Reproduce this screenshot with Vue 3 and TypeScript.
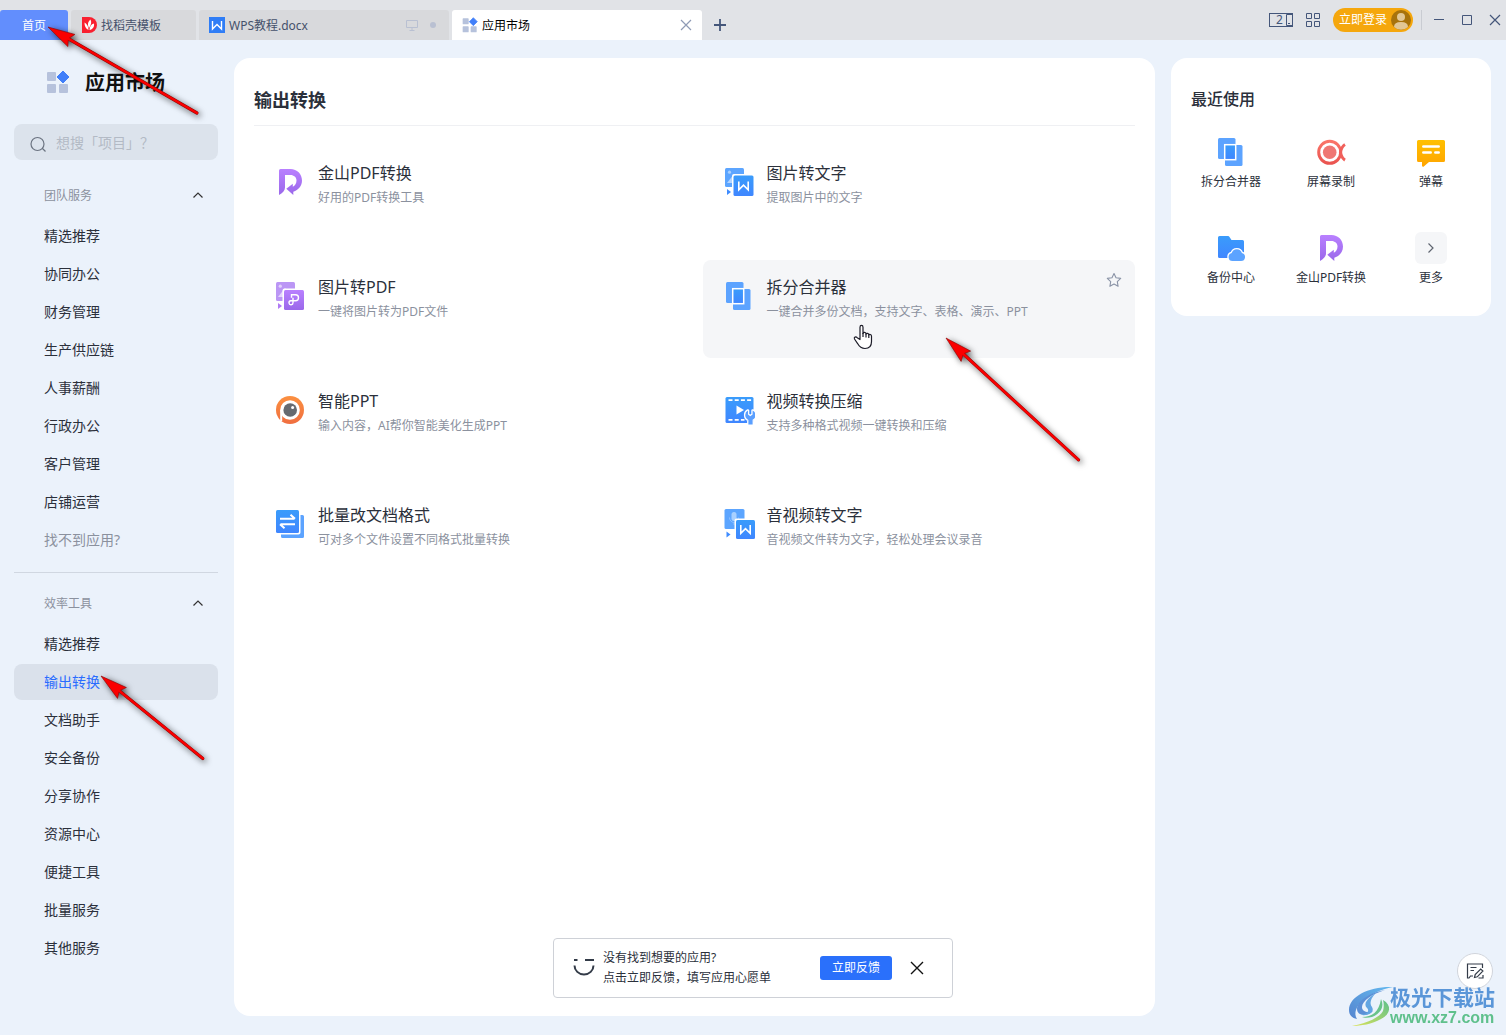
<script setup lang="ts">
import { ref } from 'vue'

interface Tool {
  icon: string
  name: string
  desc: string
}

interface Arrow {
  x: number
  y: number
  angle: number
  length: number
}

const teamItems: string[] = ['精选推荐', '协同办公', '财务管理', '生产供应链', '人事薪酬', '行政办公', '客户管理', '店铺运营']
const toolItems: string[] = ['精选推荐', '输出转换', '文档助手', '安全备份', '分享协作', '资源中心', '便捷工具', '批量服务', '其他服务']

const activeItem = ref('输出转换')
const keyword = ref('')

const tools: Tool[] = [
  { icon: 'pdf', name: '金山PDF转换', desc: '好用的PDF转换工具' },
  { icon: 'img-text', name: '图片转文字', desc: '提取图片中的文字' },
  { icon: 'img-pdf', name: '图片转PDF', desc: '一键将图片转为PDF文件' },
  { icon: 'split', name: '拆分合并器', desc: '一键合并多份文档，支持文字、表格、演示、PPT' },
  { icon: 'smart', name: '智能PPT', desc: '输入内容，AI帮你智能美化生成PPT' },
  { icon: 'video', name: '视频转换压缩', desc: '支持多种格式视频一键转换和压缩' },
  { icon: 'batch', name: '批量改文档格式', desc: '可对多个文件设置不同格式批量转换' },
  { icon: 'audio', name: '音视频转文字', desc: '音视频文件转为文字，轻松处理会议录音' },
]

const recents: { icon: string; name: string }[] = [
  { icon: 'split', name: '拆分合并器' },
  { icon: 'record', name: '屏幕录制' },
  { icon: 'danmu', name: '弹幕' },
  { icon: 'backup', name: '备份中心' },
  { icon: 'pdf', name: '金山PDF转换' },
  { icon: 'more', name: '更多' },
]

const hovered = '拆分合并器'

const arrows: Arrow[] = [
  { x: 48, y: 27, angle: 30, length: 172 },
  { x: 946, y: 338, angle: 42.6, length: 180 },
  { x: 101, y: 676, angle: 39, length: 131 },
]
</script>

<template>
  <div class="app">
    <svg class="defs" width="0" height="0" aria-hidden="true">
      <defs>
        <linearGradient id="g-purple" x1="0" y1="0" x2="0" y2="1">
          <stop offset="0" stop-color="#b980ff" /><stop offset="1" stop-color="#9a68ea" />
        </linearGradient>
        <linearGradient id="g-blue" x1="0" y1="0" x2="0" y2="1">
          <stop offset="0" stop-color="#3a9cfb" /><stop offset="1" stop-color="#3f86ff" />
        </linearGradient>
        <linearGradient id="g-orange" x1="0" y1="0" x2="0" y2="1">
          <stop offset="0" stop-color="#fb9040" /><stop offset="1" stop-color="#f06e40" />
        </linearGradient>
        <linearGradient id="g-red" x1="0" y1="0" x2="0" y2="1">
          <stop offset="0" stop-color="#fa7468" /><stop offset="1" stop-color="#ea5450" />
        </linearGradient>
        <linearGradient id="g-yellow" x1="0" y1="0" x2="0" y2="1">
          <stop offset="0" stop-color="#ffc000" /><stop offset="1" stop-color="#ffa400" />
        </linearGradient>

        <symbol id="logo" viewBox="0 0 24 24">
          <rect x="1" y="2" width="9" height="9" rx="1" fill="#b6c2dc" />
          <rect x="1" y="14" width="9" height="9" rx="1" fill="#b6c2dc" />
          <rect x="13" y="14" width="9" height="9" rx="1" fill="#b6c2dc" />
          <path d="M17 1l6 6-6 6-6-6z" fill="#417ff9" stroke="#417ff9" stroke-linejoin="round" />
        </symbol>

        <symbol id="i-pdf" viewBox="0 0 32 32">
          <path d="M5 4.500a1.500 1.500 0 0 1 1.500-1.500h10C23 3 28 8 28 14.500c0 5.500-3.500 9.500-8.700 11.200V29l-7-6.300 6.500-5v3c2.300-1 3.700-3.200 3.700-6.200 0-3.200-2.600-5.500-6-5.500H11v12.500c0 3-2.500 5.500-6 7.500z" fill="url(#g-purple)" />
        </symbol>

        <symbol id="i-img-text" viewBox="0 0 32 32">
          <rect x="2" y="2" width="19" height="19" rx="1.500" fill="#5ca5ff" />
          <circle cx="6.500" cy="6.200" r="1.600" fill="#a9d0ff" />
          <path d="M4 17l7-9 4 5v4z" fill="#b4d5ff" />
          <path d="M4 23v6l4-3z" fill="#3f8cff" />
          <rect x="9" y="8" width="23" height="23" rx="2" fill="#fff" />
          <rect x="10.500" y="9.500" width="20" height="20.500" rx="1.500" fill="url(#g-blue)" />
          <path d="M15.800 15.500v8.300l4.700-4.600 4.700 4.600v-8.300" fill="none" stroke="#fff" stroke-width="1.600" />
        </symbol>

        <symbol id="i-img-pdf" viewBox="0 0 32 32">
          <rect x="2" y="2" width="19" height="19" rx="1.500" fill="#bb96f5" />
          <circle cx="6.300" cy="6.200" r="1.600" fill="#e2d1fc" />
          <path d="M4 17l7-9 4 5v4z" fill="#e4d4fd" />
          <path d="M4 23v6l4-3z" fill="#b07af5" />
          <rect x="8.500" y="8.500" width="23" height="23" rx="2" fill="#fff" />
          <rect x="10" y="10" width="20" height="20" rx="1.500" fill="url(#g-purple)" />
          <path d="M17.500 17.800v-3h4a3 3 0 0 1 0 6h-4.800a2 2 0 1 0 2.300 2V17.800" fill="none" stroke="#fff" stroke-width="1.400" />
        </symbol>

        <symbol id="i-split" viewBox="0 0 32 32">
          <rect x="3" y="2" width="17.500" height="21" rx="1.500" fill="#5ca3ff" />
          <rect x="10" y="9" width="17.500" height="21" rx="1.500" fill="#5ca3ff" />
          <rect x="9.700" y="8.700" width="11" height="15" fill="url(#g-blue)" stroke="#fff" stroke-width="1.500" />
        </symbol>

        <symbol id="i-smart" viewBox="0 0 32 32">
          <circle cx="16" cy="16" r="14" fill="url(#g-orange)" />
          <circle cx="16" cy="16" r="9.800" fill="#fff" />
          <path d="M7.200 16v11" stroke="#fff" stroke-width="2" />
          <circle cx="16.200" cy="16" r="6.800" fill="#666a70" />
          <circle cx="18.600" cy="13.400" r="1.500" fill="#fff" />
        </symbol>

        <symbol id="i-video" viewBox="0 0 32 32">
          <rect x="2.500" y="3" width="28" height="26" rx="1.500" fill="url(#g-blue)" />
          <path d="M5.500 6.200h23M5.500 25.800h16" stroke="#fff" stroke-width="1.700" stroke-dasharray="4 2.200" />
          <path d="M13.500 11.500v9l7.500-4.500z" fill="#fff" />
          <path d="M25 16.500v4l2.300 1.700 2.300-1.700v-4a5.200 5.200 0 0 1 0 9.300V30.500h-4.200v-4.600a5.200 5.200 0 0 1-.4-9.400z" fill="#5a9fff" stroke="#fff" stroke-width="2.600" paint-order="stroke" stroke-linejoin="round" />
        </symbol>

        <symbol id="i-batch" viewBox="0 0 32 32">
          <path d="M26.500 7H28.500a1.500 1.500 0 0 1 1.500 1.500v20a1.500 1.500 0 0 1-1.500 1.500H8.500A1.500 1.500 0 0 1 7 28.500V26.500H24.500a2 2 0 0 0 2-2z" fill="#5ca3ff" />
          <rect x="2" y="2" width="23" height="23" rx="1.500" fill="url(#g-blue)" />
          <path d="M6 10.800h14.500M16.500 6.800l4.500 4M21 16.200H6.500M6 16.200l4.500 4" fill="none" stroke="#fff" stroke-width="2" />
        </symbol>

        <symbol id="i-audio" viewBox="0 0 32 32">
          <rect x="1.500" y="1" width="20" height="20" rx="1.500" fill="#5ca5ff" />
          <rect x="8.500" y="4" width="5" height="9" rx="2.500" fill="#a9d0ff" />
          <path d="M6.500 9.500a4.500 5 0 0 0 9 0M11 14.500V17" fill="none" stroke="#8cc0ff" />
          <path d="M3.500 23.500v6l4-3z" fill="#3f8cff" />
          <rect x="11.500" y="10.500" width="21" height="21" rx="2" fill="#fff" />
          <rect x="13" y="12" width="19" height="19" rx="1.500" fill="url(#g-blue)" />
          <path d="M17.800 17v8.300l4.700-4.600 4.700 4.600V17" fill="none" stroke="#fff" stroke-width="1.600" />
        </symbol>

        <symbol id="i-record" viewBox="0 0 32 32">
          <circle cx="14.700" cy="16.300" r="11" fill="none" stroke="url(#g-red)" stroke-width="3" />
          <circle cx="14.700" cy="16.300" r="6.800" fill="#ef7773" />
          <path d="M30 8.500c-2.500 1.500-3.800 4-4.600 7.800.8 3.800 2.100 6.300 4.600 7.800" fill="none" stroke="#f0605b" stroke-width="3" />
        </symbol>

        <symbol id="i-danmu" viewBox="0 0 32 32">
          <path d="M3.500 4h25A1.500 1.500 0 0 1 30 5.500v19a1.500 1.500 0 0 1-1.500 1.500H14l-5.500 4.800Q7 31 7 29.500V26H3.500A1.500 1.500 0 0 1 2 24.500v-19A1.500 1.500 0 0 1 3.500 4z" fill="url(#g-yellow)" />
          <path d="M8.300 10.500h15.400M8.300 16.500h7.400M20.300 16.500h3.400" stroke="#fff" stroke-width="2.500" stroke-linecap="round" />
        </symbol>

        <symbol id="i-backup" viewBox="0 0 32 32">
          <path d="M4.500 4h8.500q1 0 1.500 1l2 3H27.500A1.500 1.500 0 0 1 29 9.500v15a1.500 1.500 0 0 1-1.500 1.500h-23A1.500 1.500 0 0 1 3 24.500v-19A1.500 1.500 0 0 1 4.500 4z" fill="url(#g-blue)" />
          <path d="M17.500 29a4 4 0 0 1-.8-7.900 5.300 5.300 0 0 1 10.200 0A4 4 0 0 1 26 29z" fill="#5ca3ff" stroke="#fff" stroke-width="2.600" paint-order="stroke" />
        </symbol>

        <symbol id="i-more" viewBox="0 0 32 32">
          <rect width="32" height="32" rx="6" fill="#f5f6f8" />
          <path d="M13.500 11.500l4.500 4.500-4.500 4.500" fill="none" stroke="#5f6570" stroke-width="1.200" />
        </symbol>
      </defs>
    </svg>

    <header class="titlebar">
      <nav class="tabs">
        <button class="tab home"><span>首页</span></button>
        <button class="tab template">
          <svg width="16" height="16" viewBox="0 0 16 16">
            <path d="M1 0h7a8 8 0 0 1 0 16H1z" fill="#f9202f" />
            <path d="M9.500 2.500C6.500 5 6.500 8 8 11c2-3 3-5.500 1.500-8.500zM3.500 5.500c0 3.500 1 6 4 7.500C7.500 9.500 6 7 3.500 5.500zM13 6.500c-3 .8-4.200 3-4.500 6.500 3.300-.8 5-3 4.500-6.500z" fill="#fff" />
          </svg>
          <span>找稻壳模板</span>
        </button>
        <button class="tab doc">
          <svg width="16" height="16" viewBox="0 0 16 16">
            <rect width="16" height="16" fill="#2f7df6" />
            <path d="M3.500 4v8L8 7.500l4.500 4.500V4" fill="none" stroke="#fff" stroke-width="1.400" />
          </svg>
          <span>WPS教程.docx</span>
          <svg class="push" width="12" height="12" viewBox="0 0 12 12" fill="none" stroke="#b9c0d2">
            <path d="M.5 1.500h11v7H.5zM6 8.500v2.500M3.500 11.500h5" />
          </svg>
          <i class="dot"></i>
        </button>
        <button class="tab market">
          <svg width="16" height="16"><use href="#logo" /></svg>
          <span>应用市场</span>
          <svg class="push" width="12" height="12" viewBox="0 0 12 12"><path d="M1 1l10 10M11 1L1 11" stroke="#8f9bb5" stroke-width="1.200" /></svg>
        </button>
        <button class="plus" aria-label="新建标签">
          <svg width="12" height="12" viewBox="0 0 12 12"><path d="M6 0v12M0 6h12" stroke="#44567a" stroke-width="1.800" /></svg>
        </button>
      </nav>

      <div class="window-tools">
        <button aria-label="窗口数量" class="count">2<svg width="7" height="12" viewBox="0 0 7 12"><path d="M7 .5H1.500v11H7M3 9.500h2" fill="none" stroke="#44567a" /></svg></button>
        <button aria-label="应用">
          <svg width="14" height="14" viewBox="0 0 14 14"><path d="M.5.5h5v5h-5zM8.500.5h5v5h-5zM.5 8.500h5v5h-5zM8.500 8.500h5v5h-5z" fill="none" stroke="#44567a" /></svg>
        </button>
        <button class="login">
          <span>立即登录</span>
          <svg width="20" height="20" viewBox="0 0 20 20">
            <circle cx="10" cy="10" r="10" fill="#a8730c" />
            <circle cx="10" cy="7" r="4" fill="#e2c795" />
            <path d="M3 17q0-5 7-5t7 5a10 10 0 0 1-14 0z" fill="#e2c795" />
          </svg>
        </button>
        <i class="divider"></i>
        <button aria-label="最小化"><svg width="12" height="12" viewBox="0 0 12 12"><path d="M1 5.500h10" stroke="#44567a" /></svg></button>
        <button aria-label="最大化"><svg width="12" height="12" viewBox="0 0 12 12"><path d="M1.500 1.500h9v9h-9z" fill="none" stroke="#44567a" /></svg></button>
        <button aria-label="关闭"><svg width="12" height="12" viewBox="0 0 12 12"><path d="M1 1l10 10M11 1L1 11" stroke="#44567a" stroke-width="1.200" /></svg></button>
      </div>
    </header>

    <div class="body">
      <aside class="sidebar">
        <div class="brand">
          <svg width="24" height="24"><use href="#logo" /></svg>
          <h1>应用市场</h1>
        </div>
        <label class="search">
          <svg width="16" height="18" viewBox="0 0 16 18"><path d="M12.500 13.500l3 3M14 9A6.500 6.500 0 1 1 1 9a6.500 6.500 0 0 1 13 0z" fill="none" stroke="#6b7380" stroke-width="1.200" /></svg>
          <input v-model="keyword" type="text" placeholder="想搜「项目」？" aria-label="搜索应用" />
        </label>

        <nav class="group">
          <button class="group-head">
            <span>团队服务</span>
            <svg width="10" height="6" viewBox="0 0 10 6"><path d="M.5 5.500L5 1l4.500 4.500" fill="none" stroke="#333" stroke-width="1.200" /></svg>
          </button>
          <a v-for="item in teamItems" :key="item" class="item" href="#">{{ item }}</a>
          <a class="item muted" href="#">找不到应用?</a>
        </nav>
        <hr />
        <nav class="group second">
          <button class="group-head">
            <span>效率工具</span>
            <svg width="10" height="6" viewBox="0 0 10 6"><path d="M.5 5.500L5 1l4.500 4.500" fill="none" stroke="#333" stroke-width="1.200" /></svg>
          </button>
          <a
            v-for="item in toolItems"
            :key="item"
            class="item"
            :class="{ active: item === activeItem }"
            href="#"
            @click.prevent="activeItem = item"
          >{{ item }}</a>
        </nav>
      </aside>

      <main class="content">
        <h2>输出转换</h2>
        <div class="grid">
          <article v-for="tool in tools" :key="tool.name" class="card" :class="{ hovered: tool.name === hovered }">
            <svg class="card-icon" width="32" height="32"><use :href="'#i-' + tool.icon" /></svg>
            <div class="card-text">
              <h3>{{ tool.name }}</h3>
              <p>{{ tool.desc }}</p>
            </div>
            <button v-if="tool.name === hovered" class="star" aria-label="收藏">
              <svg width="16" height="16" viewBox="0 0 16 16"><path d="M8 1.500l2 4.300 4.700.6-3.400 3.200.8 4.700L8 12l-4.100 2.300.8-4.700L1.300 6.400 6 5.800z" fill="none" stroke="#8a93a6" stroke-width="1.100" stroke-linejoin="round" /></svg>
            </button>
          </article>
        </div>
      </main>

      <section class="recent">
        <h2>最近使用</h2>
        <div class="recent-grid">
          <button v-for="r in recents" :key="r.name" class="recent-item">
            <svg width="32" height="32"><use :href="'#i-' + r.icon" /></svg>
            <span>{{ r.name }}</span>
          </button>
        </div>
      </section>
    </div>

    <div class="toast" role="status">
      <svg width="22" height="20" viewBox="0 0 22 20"><path d="M1 2h3.500M12 2h9M1.500 7.500a9.500 9 0 0 0 19 0" fill="none" stroke="#333b48" stroke-width="2" /></svg>
      <p>没有找到想要的应用?<br />点击立即反馈，填写应用心愿单</p>
      <button class="feedback">立即反馈</button>
      <button class="dismiss" aria-label="关闭提示">
        <svg width="14" height="14" viewBox="0 0 14 14"><path d="M1 1l12 12M13 1L1 13" stroke="#111" stroke-width="1.400" /></svg>
      </button>
    </div>

    <button class="fab" aria-label="意见反馈">
      <svg width="18" height="16" viewBox="0 0 18 16" fill="none" stroke="#333b48" stroke-width="1.200">
        <path d="M16.500 5V1H1.500v14h1.500l1.500-2H7M4.500 4.500h6M4.500 7.500h3.500M8.500 14.500l.7-3 5.500-5.500 2.200 2-5.600 5.800zM12.500 15h4.500v-3" />
      </svg>
    </button>

    <div class="watermark">
      <svg width="46" height="42" viewBox="0 0 46 42">
        <defs>
          <linearGradient id="g-wave" x1="0" y1="1" x2="1" y2="0">
            <stop offset="0" stop-color="#5585cf" /><stop offset="1" stop-color="#63b9ef" />
          </linearGradient>
          <linearGradient id="g-leaf" x1="0" y1="1" x2="1" y2="0">
            <stop offset="0" stop-color="#dce35a" /><stop offset="1" stop-color="#5cc08a" />
          </linearGradient>
        </defs>
        <path d="M45 1C22 0 1 10 1 24c0 5 3 8 8 9C2 21 20 6 45 1z" fill="url(#g-wave)" />
        <path d="M37 4C20 7 9 16 9 23c0 7 10 8 16 2-5 2-11 1-11-4 0-6 10-13 23-17z" fill="#5b8fd6" />
        <path d="M28 7c-9 5-13 11-9 15 3 3 0 6-6 7 8 1 14-3 11-8-3-4-1-9 4-14z" fill="#62a5e2" />
        <path d="M35 14c9 5 8 14-2 19-9 5-20 7-29 7 16-3 28-9 31-15 1-4 1-7 0-11z" fill="url(#g-leaf)" />
        <path d="M33 13c4 8-1 15-9 18-4 1-8 1-10 0 10 0 17-5 19-18z" fill="#69c389" />
      </svg>
      <div>
        <strong>极光下载站</strong>
        <span>www.xz7.com</span>
      </div>
    </div>

    <svg class="pointer" width="20" height="26" viewBox="0 0 20 26">
      <path d="M7 15.500V3.200C7 .8 10 .8 10 3.200V9.500c.2-1.600 3-1.400 3 .6.400-1.300 2.800-1 2.800.9.500-1 2.700-.8 2.700 1.200v5.300c0 4-2.300 7-6.500 7-3.500 0-5.500-1.500-7.200-4.700L1.500 15c-.8-1.800 1.300-2.800 2.700-1.300z" fill="#fff" stroke="#1c1c28" stroke-width="1.200" stroke-linejoin="round" />
      <path d="M10 9v4M13 10v3.500M15.800 11v3" stroke="#1c1c28" stroke-width="1.200" />
    </svg>

    <svg class="arrows" aria-hidden="true">
      <g v-for="a in arrows" :key="a.x" class="arrow">
        <g :transform="`translate(${a.x} ${a.y}) rotate(${a.angle})`">
          <path :d="`M20 0H${a.length}`" stroke="#8d0606" stroke-width="3.200" stroke-linecap="round" />
          <path d="M0 0L27 -7L23.500 0L27 7z" fill="#fa0000" stroke="#8d0606" stroke-width=".6" />
          <path :d="`M20 0H${a.length}`" stroke="#fa0000" stroke-width="2.400" stroke-linecap="round" />
        </g>
      </g>
    </svg>
  </div>
</template>

<style>
body {
  margin: 0;
  background: #ebf2fb;
}
</style>

<style scoped>
.app {
  position: relative;
  display: flex;
  flex-direction: column;
  min-height: 100vh;
  background: #ebf2fb;
  color: #2b303b;
  font-family: "Noto Sans", "Noto Sans CJK SC", sans-serif;
  font-size: 12px;
  line-height: 20px;
}
.defs {
  position: absolute;
}
svg {
  display: block;
  flex: none;
}
button {
  margin: 0;
  padding: 0;
  border: 0;
  background: none;
  color: inherit;
  font: inherit;
  cursor: pointer;
}
h1, h2, h3, p {
  margin: 0;
}
a {
  color: inherit;
  text-decoration: none;
}

.titlebar {
  display: flex;
  justify-content: space-between;
  height: 40px;
  background: #e1e3e7;
}
.tabs {
  display: flex;
  align-items: flex-end;
  gap: 3px;
}
.tab {
  display: flex;
  align-items: center;
  gap: 4px;
  box-sizing: border-box;
  height: 30px;
  padding: 0 10px;
  border-radius: 3px 3px 0 0;
  background: #d8d9dc;
  color: #45516b;
  white-space: nowrap;
}
.tab span,
.group-head span {
  padding-top: 2px;
}
.home {
  justify-content: center;
  width: 68px;
  background: #628efd;
  color: #fff;
}
.template {
  width: 125px;
}
.doc,
.market {
  width: 250px;
}
.market {
  background: #fff;
  color: #000;
}
.push {
  margin-left: auto;
}
.dot {
  width: 6px;
  height: 6px;
  margin: 0 3px 0 8px;
  border-radius: 50%;
  background: #b9c0d2;
}
.plus {
  display: flex;
  align-items: center;
  justify-content: center;
  width: 30px;
  height: 30px;
}
.window-tools {
  display: flex;
  align-items: center;
  gap: 16px;
  height: 40px;
  padding-right: 5px;
}
.window-tools .count {
  display: flex;
  align-items: center;
  justify-content: flex-end;
  gap: 2px;
  box-sizing: border-box;
  width: 24px;
  height: 14px;
  margin-right: -3px;
  border: 1px solid #44567a;
  color: #44567a;
  line-height: 12px;
}
.login {
  display: flex;
  align-items: center;
  gap: 4px;
  box-sizing: border-box;
  height: 24px;
  margin-left: -3px;
  padding: 0 2px 0 6px;
  border-radius: 12px;
  background: #f5a70d;
  color: #fff;
}
.divider {
  width: 1px;
  height: 20px;
  margin: 0 -5px 0 -8px;
  background: #c9ccd2;
}

.body {
  display: flex;
  flex: 1;
  align-items: stretch;
  padding-right: 15px;
}
.sidebar {
  box-sizing: border-box;
  width: 234px;
  padding: 30px 16px 16px 14px;
}
.brand {
  display: flex;
  align-items: center;
  gap: 15px;
  height: 24px;
  padding-left: 32px;
}
.brand h1 {
  padding-top: 2px;
  color: #111;
  font-size: 20px;
  line-height: 24px;
}
.search {
  display: flex;
  align-items: center;
  gap: 10px;
  height: 36px;
  margin-top: 30px;
  padding: 0 16px;
  border-radius: 8px;
  background: #dce3ec;
}
.search svg {
  margin-top: 4px;
}
.search input {
  flex: 1;
  min-width: 0;
  padding: 2px 0 0;
  border: 0;
  outline: 0;
  background: none;
  color: #2b303b;
  font: inherit;
  font-size: 14px;
}
.search input::placeholder {
  color: #b3bac5;
}
.group {
  display: flex;
  flex-direction: column;
  gap: 2px;
  margin-top: 16px;
}
.group-head {
  display: flex;
  align-items: center;
  justify-content: space-between;
  height: 40px;
  padding: 0 15px 2px 30px;
  color: #8b919e;
}
.item {
  height: 36px;
  padding-left: 30px;
  border-radius: 8px;
  font-size: 14px;
  line-height: 36px;
}
.item.muted {
  color: #8b919e;
}
.item.active {
  background: #dae1eb;
  color: #2a6cff;
}
hr {
  height: 1px;
  margin: 14px 0 0;
  border: 0;
  background: #d0d7e1;
}
.group.second {
  margin-top: 11px;
}

.content {
  flex: 1;
  min-width: 0;
  margin: 18px 16px 19px 0;
  padding: 0 20px;
  border-radius: 16px;
  background: #fff;
}
.content h2 {
  padding: 30px 0 13px;
  border-bottom: 1px solid #eff0f3;
  font-size: 18px;
  line-height: 24px;
}
.grid {
  display: grid;
  grid-template-columns: 1fr 1fr;
  gap: 16px;
  margin-top: 20px;
}
.card {
  position: relative;
  display: flex;
  gap: 12px;
  box-sizing: border-box;
  height: 98px;
  padding: 15px 20px;
  border-radius: 8px;
}
.card.hovered {
  background: #f5f6f8;
}
.card-icon {
  margin-top: 5px;
}
.card h3 {
  font-size: 16px;
  font-weight: 400;
  line-height: 24px;
}
.card p {
  color: #8b919e;
  line-height: 26px;
}
.star {
  position: absolute;
  top: 12px;
  right: 13px;
}

.recent {
  align-self: flex-start;
  box-sizing: border-box;
  width: 320px;
  margin-top: 18px;
  padding: 30px 10px;
  border-radius: 16px;
  background: #fff;
}
.recent h2 {
  padding-left: 10px;
  font-size: 16px;
  font-weight: 500;
  line-height: 22px;
}
.recent-grid {
  display: grid;
  grid-template-columns: repeat(3, 100px);
  row-gap: 40px;
  margin: 26px 0 -2px;
}
.recent-item {
  display: flex;
  flex-direction: column;
  align-items: center;
  gap: 4px;
  line-height: 20px;
}

.toast {
  position: fixed;
  bottom: 37px;
  left: 50%;
  display: flex;
  align-items: center;
  box-sizing: border-box;
  width: 400px;
  height: 60px;
  padding: 0 28px 0 19px;
  border: 1px solid #ced1d7;
  border-radius: 4px;
  background: #fff;
  transform: translateX(-50%);
}
.toast p {
  margin-left: 8px;
}
.feedback {
  width: 72px;
  height: 24px;
  margin-left: auto;
  border-radius: 3px;
  background: #2a70fb;
  color: #fff;
}
.dismiss {
  margin-left: 18px;
}

.fab {
  position: fixed;
  right: 13px;
  bottom: 46px;
  display: flex;
  align-items: center;
  justify-content: center;
  box-sizing: border-box;
  width: 36px;
  height: 36px;
  border: 1px solid #d0d4db;
  border-radius: 50%;
  background: #fff;
}
.watermark {
  position: fixed;
  right: 11px;
  bottom: 7px;
  display: flex;
  align-items: flex-end;
  pointer-events: none;
}
.watermark div {
  display: flex;
  flex-direction: column;
  margin-left: -4px;
}
.watermark strong {
  color: #5a96d8;
  font-size: 21px;
  line-height: 22px;
}
.watermark span {
  color: #5fc08c;
  font-family: "Liberation Sans", sans-serif;
  font-size: 16px;
  font-weight: 700;
  line-height: 20px;
}
.pointer {
  position: absolute;
  top: 324px;
  left: 853px;
  pointer-events: none;
}
.arrows {
  position: absolute;
  top: 0;
  left: 0;
  width: 100%;
  height: 100%;
  overflow: visible;
  pointer-events: none;
}
.arrow {
  filter: drop-shadow(2px 2px 3px rgba(0, 0, 0, 0.7));
}
</style>
